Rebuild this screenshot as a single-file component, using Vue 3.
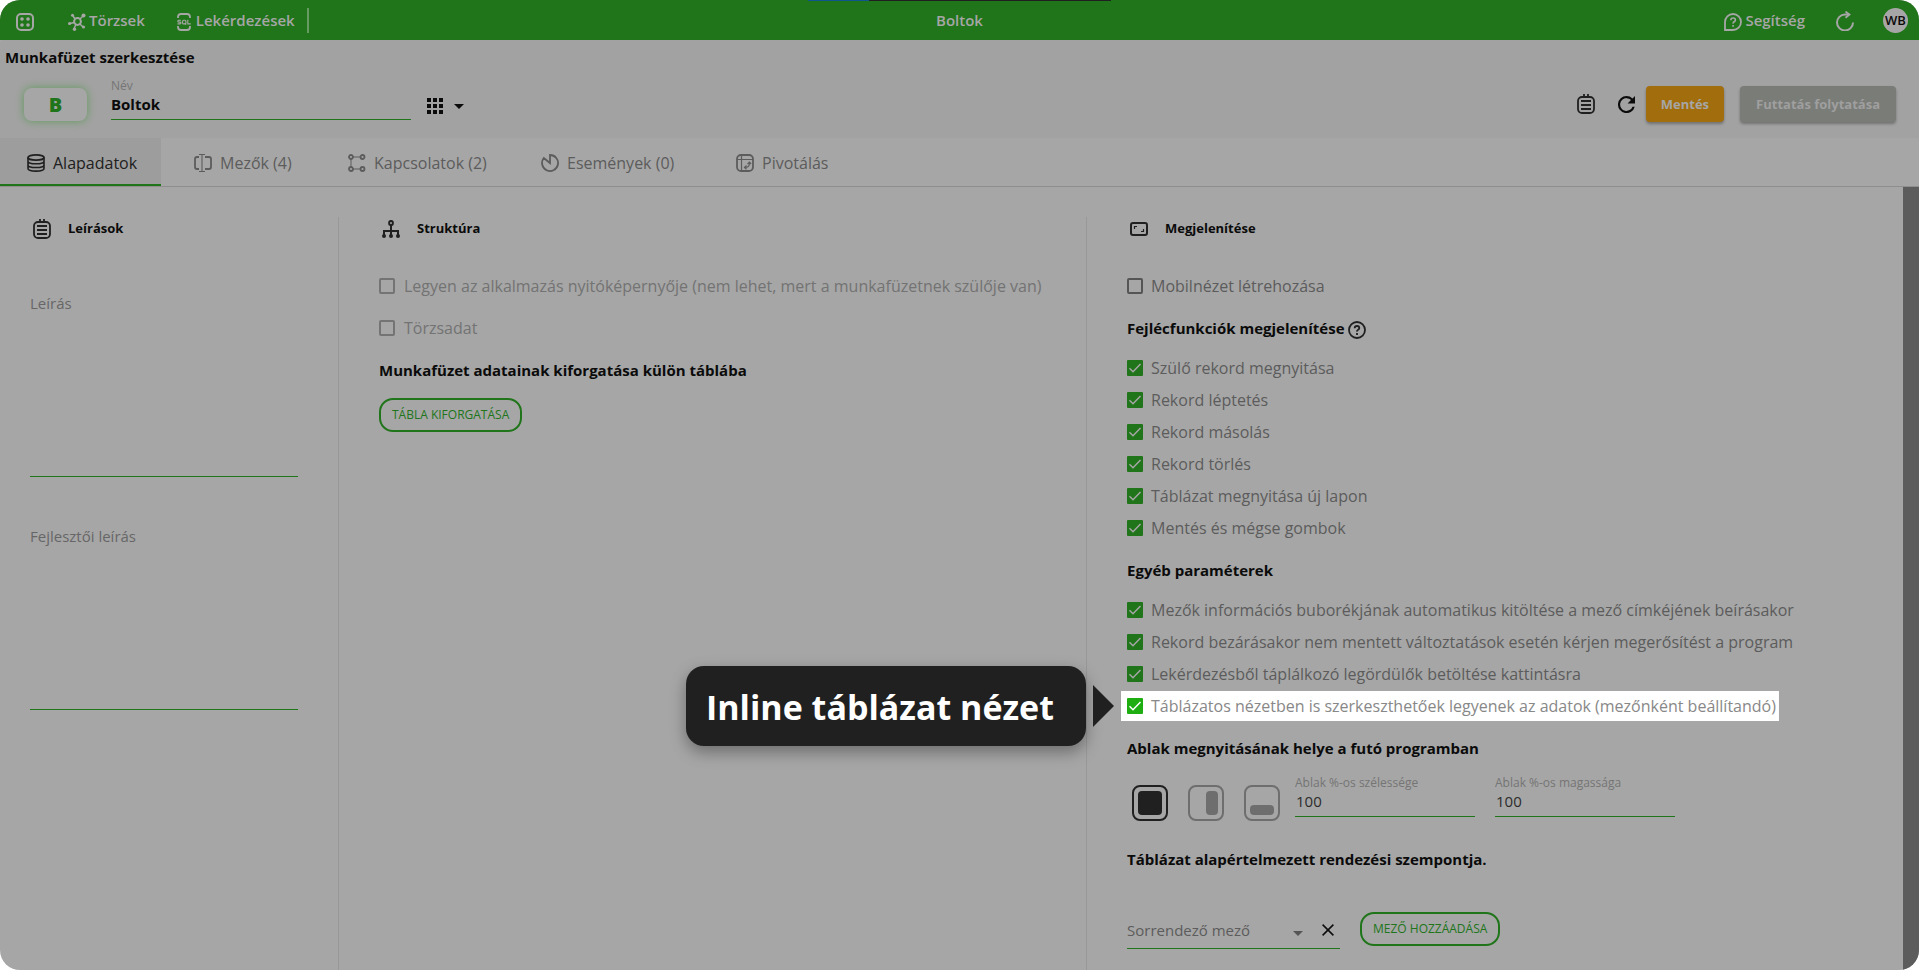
<script setup>
import { reactive, ref } from 'vue'

const tabs = ['Alapadatok', 'Mezők (4)', 'Kapcsolatok (2)', 'Események (0)', 'Pivotálás']
const activeTab = ref(0)
const name = ref('Boltok')
const width = ref('100')
const height = ref('100')
const placement = ref(0)
const placements = ['Teljes ablak', 'Jobb oldal', 'Alsó sáv']

const headerOptions = reactive([
  { label: 'Szülő rekord megnyitása', on: true },
  { label: 'Rekord léptetés', on: true },
  { label: 'Rekord másolás', on: true },
  { label: 'Rekord törlés', on: true },
  { label: 'Táblázat megnyitása új lapon', on: true },
  { label: 'Mentés és mégse gombok', on: true }
])
const otherOptions = reactive([
  { label: 'Mezők információs buborékjának automatikus kitöltése a mező címkéjének beírásakor', on: true },
  { label: 'Rekord bezárásakor nem mentett változtatások esetén kérjen megerősítést a program', on: true },
  { label: 'Lekérdezésből táplálkozó legördülők betöltése kattintásra', on: true },
  { label: 'Táblázatos nézetben is szerkeszthetőek legyenek az adatok (mezőnként beállítandó)', on: true, tip: 'Inline táblázat nézet' }
])
const mobileView = ref(false)
</script>

<template>
  <div class="app">
    <header class="topbar">
      <div class="loader"></div>
      <nav class="left">
        <button class="plain" aria-label="Alkalmazások">
          <svg width="18" height="18" viewBox="0 0 18 18" fill="none" stroke="currentColor" stroke-width="2"><rect x="1" y="1" width="16" height="16" rx="4" /><g fill="currentColor" stroke="none"><circle cx="6" cy="6" r="1.8" /><circle cx="12" cy="6" r="1.8" /><circle cx="6" cy="12" r="1.8" /><circle cx="12" cy="12" r="1.8" /></g></svg>
        </button>
        <a href="#" class="navlink torzsek">
          <svg width="18" height="18" viewBox="0 0 18 18" fill="none" stroke="currentColor" stroke-width="1.5"><circle cx="9.5" cy="8.5" r="3.4" stroke-width="2" /><path d="M7 6 5 3M12 6l3-3M6 9.5l-4 1M7.600 12 6 16M12 11l3 3" /><g fill="currentColor" stroke="none"><circle cx="4.500" cy="2.300" r="1.500" /><circle cx="15.500" cy="2.500" r="2" /><circle cx="1.600" cy="10.500" r="1.600" /><circle cx="6.500" cy="16.200" r="1.700" /><circle cx="15.500" cy="14" r="1.600" /></g></svg>
          Törzsek
        </a>
        <a href="#" class="navlink">
          <svg width="14" height="18" viewBox="0 0 14 18" fill="none" stroke="currentColor" stroke-width="1.800"><path d="M1 5V4q0-3 3-3h6q3 0 3 3v1M1 13v1q0 3 3 3h6q3 0 3-3v-1" /><g stroke-width="1.100"><path d="M3.900 7.300H1.800q-1 0-1 .9t1 .9h1.200q1 0 1 .9t-1 .9H.5" /><rect x="5.600" y="7.300" width="3.300" height="3.600" rx="1" /><path d="m7.800 10 1.300 1.700M10.800 6.800v4.100h3" /></g></svg>
          Lekérdezések
        </a>
        <span class="sep"></span>
      </nav>
      <div class="title">Boltok</div>
      <div class="right">
        <a href="#" class="navlink help">
          <svg width="18" height="18" viewBox="0 0 18 18" fill="none" stroke="currentColor" stroke-width="1.800"><path d="M1 17V9a8 8 0 1 1 8 8Z" /><path d="M6.800 7.200q0-2.200 2.300-2.200t2.300 2q0 1.100-1.200 1.800T9.100 10.600M9.100 12v1.800" stroke-width="1.600" /></svg>
          Segítség
        </a>
        <button class="plain" aria-label="Újratöltés">
          <svg width="18" height="20" viewBox="0 0 18 20" fill="none" stroke="currentColor" stroke-width="2"><path d="M17 11.500A8 8 0 1 1 9 3.500h4" /><path d="m9.500.6 4 2.900-4 3.300" stroke-width="1.800" /></svg>
        </button>
        <button class="avatar">WB</button>
      </div>
    </header>

    <section class="panel">
      <h1>Munkafüzet szerkesztése</h1>
      <div class="toolbar">
        <button class="badge">B</button>
        <div class="field name">
          <label for="name">Név</label>
          <input id="name" v-model="name" type="text">
        </div>
        <button class="plain gridmenu" aria-label="Ikon választása">
          <svg width="16" height="16" viewBox="0 0 16 16" fill="currentColor"><path d="M0 0h4v4H0zM6 0h4v4H6zM12 0h4v4h-4zM0 6h4v4H0zM6 6h4v4H6zM12 6h4v4h-4zM0 12h4v4H0zM6 12h4v4H6zM12 12h4v4h-4z" /></svg>
          <svg width="10" height="5" viewBox="0 0 10 5" fill="currentColor"><path d="M0 0h10L5 5z" /></svg>
        </button>
        <div class="actions">
          <button class="plain dark" aria-label="Jegyzet">
            <svg width="18" height="20" viewBox="0 0 18 20" fill="none" stroke="currentColor" stroke-width="1.800"><rect x="1" y="3" width="16" height="16" rx="4" /><path d="M7 0v3M11 0v3M4 7h10M4 11h10M4 15h10" /></svg>
          </button>
          <button class="plain refresh" aria-label="Frissítés">
            <svg width="17" height="17" viewBox="4 4 16 16" fill="currentColor"><path d="M17.650 6.350A7.960 7.960 0 0 0 12 4a8 8 0 1 0 7.730 10h-2.080A6 6 0 1 1 12 6c1.660 0 3.140.690 4.220 1.780L13 11h7V4z" /></svg>
          </button>
          <button class="raised save">Mentés</button>
          <button class="raised run" disabled>Futtatás folytatása</button>
        </div>
      </div>
    </section>

    <nav class="tabs" role="tablist">
      <button v-for="(tab, i) in tabs" :key="tab" role="tab" :aria-selected="i === activeTab" :class="{ active: i === activeTab }" @click="activeTab = i">
        <svg width="18" height="18" viewBox="0 0 18 18" fill="none" stroke="currentColor" stroke-width="1.800">
          <template v-if="i === 0"><ellipse cx="9" cy="3.500" rx="8" ry="2.600" /><path d="M1 3.500v11c0 1.500 3.600 2.600 8 2.600s8-1.100 8-2.600v-11M1 7.200c0 1.500 3.600 2.600 8 2.600s8-1.100 8-2.600M1 10.900c0 1.500 3.600 2.600 8 2.600s8-1.100 8-2.600" stroke-width="1.600" /></template>
          <template v-else-if="i === 1"><path d="M5 3H3Q1 3 1 5v8q0 2 2 2h2M11 3h4q2 0 2 2v8q0 2-2 2h-4" /><path d="M8 .5v17M5 .5h6M5 17.500h6" stroke-width="1.100" /></template>
          <template v-else-if="i === 2"><circle cx="3" cy="3" r="2" /><circle cx="14.500" cy="3" r="2" /><circle cx="3" cy="15" r="2" /><circle cx="14.500" cy="15" r="2" /><path d="M5 3h7.500M3 5v8M5 15h7.500" stroke-width="1" /></template>
          <template v-else-if="i === 3"><path d="M9 9V1a8 8 0 1 1-6.200 3L9 9z" /></template>
          <template v-else><rect x="1" y="1" width="16" height="16" rx="4" /><path d="M1 5.500h16M5.500 1v16" stroke-width="1.200" /><path d="M9 13.500q4.500 0 4.500-4.500M10.500 11.500l-2 2 2 1.700M11.500 10l2-1.800L15 10" stroke-width="1.200" /></template>
        </svg>
        {{ tab }}
      </button>
    </nav>

    <div class="body">
      <main class="columns">
        <section class="col notes">
          <h2>
            <svg width="18" height="20" viewBox="0 0 18 20" fill="none" stroke="currentColor" stroke-width="1.800"><rect x="1" y="3" width="16" height="16" rx="4" /><path d="M7 0v3M11 0v3M4 7h10M4 11h10M4 15h10" /></svg>
            Leírások
          </h2>
          <div class="area">
            <label for="desc">Leírás</label>
            <textarea id="desc"></textarea>
          </div>
          <div class="area">
            <label for="devdesc">Fejlesztői leírás</label>
            <textarea id="devdesc"></textarea>
          </div>
        </section>

        <section class="col">
          <h2>
            <svg width="18" height="18" viewBox="0 0 18 18" fill="none" stroke="currentColor" stroke-width="2"><rect x="7.200" y="1" width="3.600" height="4" rx="1.500" /><path d="M9 5v11M2 16v-5h14v5" /><g fill="currentColor" stroke="none"><circle cx="2" cy="16" r="2" /><circle cx="9" cy="16" r="2" /><circle cx="16" cy="16" r="2" /></g></svg>
            Struktúra
          </h2>
          <label class="check single off"><span class="box"><input type="checkbox" disabled></span>Legyen az alkalmazás nyitóképernyője (nem lehet, mert a munkafüzetnek szülője van)</label>
          <label class="check single off"><span class="box"><input type="checkbox" disabled></span>Törzsadat</label>
          <h3>Munkafüzet adatainak kiforgatása külön táblába</h3>
          <button class="outline pivot">TÁBLA KIFORGATÁSA</button>
        </section>

        <section class="col">
          <h2>
            <svg width="18" height="14" viewBox="0 0 18 14" fill="none" stroke="currentColor" stroke-width="2"><rect x="1" y="1" width="16" height="12" rx="2" /><path d="M4.500 7V4.500H7M11 9.500h2.500V7" stroke-width="1.200" /></svg>
            Megjelenítése
          </h2>
          <label class="check single"><span class="box"><input v-model="mobileView" type="checkbox"></span>Mobilnézet létrehozása</label>
          <h3>
            Fejlécfunkciók megjelenítése
            <svg width="18" height="18" viewBox="0 0 18 18" fill="none" stroke="currentColor" stroke-width="1.800"><circle cx="9" cy="9" r="8" /><path d="M6.700 7.200q0-2.200 2.300-2.200t2.300 2q0 1.100-1.200 1.800T9 10.600M9 12v2" /></svg>
          </h3>
          <ul>
            <li v-for="o in headerOptions" :key="o.label">
              <label class="check"><span class="box"><input v-model="o.on" type="checkbox"><svg v-if="o.on" width="16" height="16" viewBox="0 0 16 16" fill="none" stroke="currentColor" stroke-width="1.500"><path d="m2.500 8.200 3.500 3.500L13.500 4" /></svg></span>{{ o.label }}</label>
            </li>
          </ul>
          <h3>Egyéb paraméterek</h3>
          <ul>
            <li v-for="o in otherOptions" :key="o.label" :class="{ spot: o.tip }">
              <label class="check"><span class="box"><input v-model="o.on" type="checkbox"><svg v-if="o.on" width="16" height="16" viewBox="0 0 16 16" fill="none" stroke="currentColor" stroke-width="1.500"><path d="m2.500 8.200 3.500 3.500L13.500 4" /></svg></span>{{ o.label }}</label>
              <div v-if="o.tip" class="callout" role="tooltip">
                <div class="bubble">{{ o.tip }}</div>
                <svg width="21" height="42" viewBox="0 0 21 42"><path d="M0 0v42l21-21z" fill="#202020" /></svg>
              </div>
            </li>
          </ul>
          <h3>Ablak megnyitásának helye a futó programban</h3>
          <div class="placement">
            <div class="choices">
              <button v-for="(p, i) in placements" :key="p" class="plain" :class="{ chosen: i === placement }" :aria-label="p" @click="placement = i">
                <svg width="36" height="36" viewBox="0 0 36 36" fill="currentColor">
                  <rect x="1" y="1" width="34" height="34" rx="7" fill="none" stroke="currentColor" stroke-width="2" />
                  <rect v-if="i === 0" x="6" y="6" width="24" height="24" rx="4" />
                  <rect v-else-if="i === 1" x="18" y="6" width="12" height="24" rx="4" />
                  <rect v-else x="6" y="20" width="24" height="10" rx="4" />
                </svg>
              </button>
            </div>
            <div class="field size">
              <label for="w">Ablak %-os szélessége</label>
              <input id="w" v-model="width" type="text">
            </div>
            <div class="field size">
              <label for="h">Ablak %-os magassága</label>
              <input id="h" v-model="height" type="text">
            </div>
          </div>
          <h3>Táblázat alapértelmezett rendezési szempontja.</h3>
          <div class="sort">
            <div class="picker">
              <select aria-label="Sorrendező mező"><option>Sorrendező mező</option></select>
              <svg class="arrow" width="10" height="5" viewBox="0 0 10 5" fill="currentColor"><path d="M0 0h10L5 5z" /></svg>
              <button class="plain" aria-label="Törlés"><svg width="12" height="12" viewBox="0 0 12 12" stroke="currentColor" stroke-width="1.500"><path d="m.6.6 10.800 10.800M11.400.6.600 11.400" /></svg></button>
            </div>
            <button class="outline">MEZŐ HOZZÁADÁSA</button>
          </div>
        </section>
      </main>
      <div class="track"></div>
    </div>
  </div>
</template>

<style>
html, body { background: #fff; }
</style>

<style scoped>
* { box-sizing: border-box; }
.app {
  display: flex; flex-direction: column; min-height: 100vh; overflow: hidden;
  border-radius: 20px; background: #a6a6a6; color: #0b0b0b;
  font: 16px/24px "Open Sans", "Noto Sans", sans-serif;
}
button, input, textarea, select { font: inherit; color: inherit; margin: 0; padding: 0; border: 0; background: none; border-radius: 0; outline: 0; }
button { cursor: pointer; }
svg { display: block; flex: none; }
h1, h2, h3, ul { margin: 0; padding: 0; list-style: none; }
.plain { display: flex; align-items: center; }

.topbar {
  position: relative; display: grid; grid-template-columns: 1fr auto 1fr; align-items: center;
  height: 40px; background: #20751a; color: #a6a6a6; font-size: 15px; font-weight: 600; padding: 0 11px;
}
.loader { position: absolute; top: 0; left: 42%; right: 42%; height: 1px; background: linear-gradient(90deg, #10558c 20%, #202020 20%); margin: 0 2px; }
.left, .right, .navlink { display: flex; align-items: center; }
.left { padding-left: 5px; }
.left svg, .right svg { margin-top: 4px; }
.right { justify-content: flex-end; }
.right .plain svg { margin-top: 2px; }
.navlink { color: inherit; text-decoration: none; gap: 5px; line-height: 22px; }
.torzsek { margin: 0 32px 0 34px; gap: 3px; }
.sep { width: 2px; height: 25px; margin-left: 12px; background: #669b61; }
.title { line-height: 22px; }
.help { gap: 3px; margin-right: 31px; }
.avatar { width: 25px; height: 25px; margin-left: 29px; border-radius: 50%; background: #a6a6a6; color: #0b0b0b; font-size: 13px; font-weight: 600; line-height: 25px; }

.panel { background: #a2a2a2; padding-top: 5px; border-top-left-radius: 4px; }
h1 { padding: 0 0 1px 5px; font-size: 15px; font-weight: 700; line-height: 24px; }
.toolbar { display: flex; align-items: center; height: 68px; padding: 0 23px 0 24px; }
.badge { width: 63px; height: 33px; border-radius: 8px; background: #a6a6a6; box-shadow: 0 0 8px #5f9a5a; color: #20751a; font-size: 20px; font-weight: 800; line-height: 33px; }
.field { display: flex; flex-direction: column; border-bottom: 1px solid #20751a; }
.field label { color: #757575; font-size: 12px; line-height: 16px; }
.field input { width: 100%; height: 25px; padding-bottom: 5px; }
.name { align-self: flex-start; width: 300px; margin: 8px 16px 0 24px; }
.name input { font-size: 15px; font-weight: 700; }
.gridmenu { gap: 11px; padding-top: 4px; }
.actions { display: flex; align-items: center; margin-left: auto; }
.dark { color: #202020; }
.refresh { margin: 0 11px 0 23px; }
.raised { height: 36px; padding: 0 16px; border-radius: 4px; color: #a6a6a6; font-size: 13px; font-weight: 700; box-shadow: 0 2px 3px rgba(0, 0, 0, .3); }
.save { background: #a26d0d; margin-right: 16px; padding: 0 15px; }
.run { background: #7a7c78; color: #9f9f9f; cursor: default; }

.tabs { display: grid; grid-template-columns: 161px 154px 193px 195px 1fr; height: 49px; border-bottom: 1px solid #8e8e8e; color: #5c5c5c; }
.tabs button { display: flex; align-items: center; justify-self: start; gap: 8px; padding: 2px 0 0 33px; white-space: nowrap; }
.tabs button:first-child { justify-self: stretch; padding-left: 27px; }
.tabs button.active { background: #9d9d9d; color: #202020; box-shadow: inset 0 -2px #20751a; }

.body { display: flex; flex: 1; }
.track { width: 16px; flex: none; background: #5c5c5c; }
.columns { flex: 1; min-width: 0; display: grid; grid-template-columns: 338fr 748fr 817fr; padding-top: 30px; }
.col { min-width: 0; padding-left: 40px; border-left: 1px solid #989898; }
.col.notes { padding: 0 40px 0 30px; border-left: 0; }
h2 { display: flex; align-items: center; gap: 17px; height: 24px; margin-bottom: 24px; padding: 0 0 2px 3px; font-size: 13px; font-weight: 700; }
h2 svg { color: #202020; margin-top: 2px; }
h3 { display: flex; align-items: center; gap: 3px; height: 42px; margin-top: 1px; padding-bottom: 2px; font-size: 15px; font-weight: 700; white-space: nowrap; }
h3 svg { color: #202020; margin-top: 4px; }
.area { display: flex; flex-direction: column; height: 186px; margin-top: 50px; border-bottom: 1px solid #20751a; }
.area + .area { margin-top: 47px; }
.area label { color: #666; font-size: 15px; }
.area textarea { flex: 1; width: 100%; resize: none; }

.check { display: flex; align-items: center; gap: 8px; height: 32px; color: #5c5c5c; white-space: nowrap; }
.check.single { height: 42px; }
.check.off { color: #737373; gap: 9px; }
.box { position: relative; flex: none; width: 16px; height: 16px; color: #a6a6a6; }
.box input { display: block; appearance: none; width: 16px; height: 16px; border: 2px solid #555; border-radius: 2px; }
.off .box input { border-color: #747474; }
.box input:checked { border: 0; background: #20751a; border-radius: 1px; }
.box svg { position: absolute; inset: 0; pointer-events: none; }
ul { margin: 2px 0 6px; }
.spot { position: relative; width: max-content; margin: 0 -6px; padding: 0 3px 0 6px; background: linear-gradient(#fff, #fff) center / 100% 30px no-repeat; }
.spot .check { color: #888; }
.spot .box { color: #fff; }
.spot .box input:checked { background: #1fae11; }
.callout { position: absolute; top: 50%; right: 100%; display: flex; align-items: center; gap: 7px; margin: -40px 7px 0 0; }
.bubble { width: 400px; height: 80px; padding: 0 20px; border-radius: 18px; background: #202020; color: #fff; font-size: 34px; font-weight: 700; line-height: 82px; white-space: nowrap; box-shadow: 0 6px 16px rgba(0, 0, 0, .35); }

.outline { height: 34px; padding: 0 11px; border: 2px solid #20751a; border-radius: 14px; color: #20751a; font-size: 12px; line-height: 30px; }
.pivot { display: block; margin-top: 6px; }
.placement { display: flex; align-items: flex-start; gap: 20px; margin: 5px 0 18px; }
.choices { display: flex; gap: 20px; padding: 10px 0 0 5px; margin-right: -5px; color: #6e6e6e; }
.choices .chosen { color: #202020; }
.size { width: 180px; }
.size input { padding-left: 1px; color: #2c2c2c; font-size: 15px; }
.sort { display: flex; gap: 20px; margin-top: 31px; align-items: flex-start; }
.picker { display: flex; align-items: center; width: 213px; height: 37px; padding-right: 6px; border-bottom: 1px solid #20751a; }
.picker select { appearance: none; width: 166px; height: 36px; color: #5c5c5c; font-size: 15px; }
.arrow { color: #555; margin: 6px 19px 0 0; }
</style>
